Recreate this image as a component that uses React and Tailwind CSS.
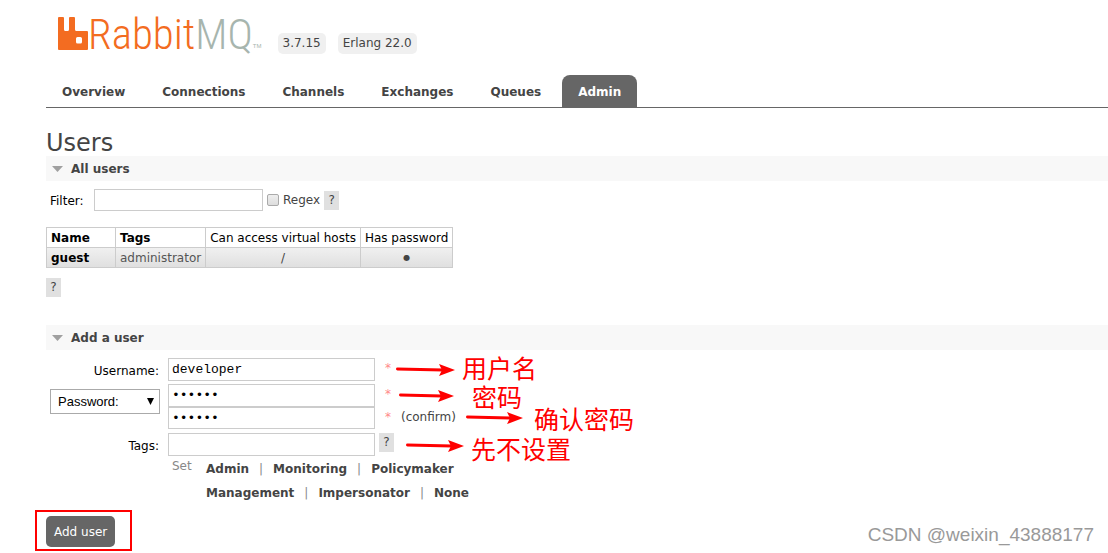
import React from "react";

const tabs = ["Overview", "Connections", "Channels", "Exchanges", "Queues", "Admin"];

const tagLinks = [
  ["Admin", "Monitoring", "Policymaker"],
  ["Management", "Impersonator", "None"],
];

const inputClass =
  "w-[207px] border border-[#ccc] bg-white px-[3px] font-['Liberation_Mono',monospace] text-[13px] leading-4 text-black outline-none";

function Logo() {
  return (
    <div className="flex h-[50px] items-end" aria-label="RabbitMQ">
      <svg width="30" height="33" viewBox="0 0 30 33" aria-hidden="true">
        <path
          fill="#f36c21"
          fillRule="evenodd"
          d="M1 0h4q1 0 1 1v11.500q0 1.500 1.500 1.500h2q1.500 0 1.500-1.500V1q0-1 1-1h4q1 0 1 1v11.500q0 1.500 1.500 1.500h10.500q1 0 1 1v17q0 1-1 1H1q-1 0-1-1V1q0-1 1-1zM19.500 20q-1.500 0-1.500 1.500v3.500q0 1.500 1.500 1.500h3q1.500 0 1.500-1.500V21.500q0-1.500-1.500-1.500z"
        />
      </svg>
      <span className="-mb-[9px] font-['Roboto_Condensed','Liberation_Sans_Narrow',sans-serif] text-[43px] leading-[50px] font-light text-[#f36c21]">
        Rabbit<span className="text-[#a7b5ae]">MQ</span>
      </span>
      <span className="font-['Liberation_Sans',sans-serif] text-[6px] leading-[8px] text-[#a7b5ae]">TM</span>
    </div>
  );
}

function Help() {
  return (
    <button type="button" aria-label="Help" className="h-[19px] w-[15px] bg-[#e0e0e0] text-[12px] leading-[19px] text-[#444]">
      ?
    </button>
  );
}

function SectionTitle({ children }) {
  return (
    <h2 className="flex h-[25px] items-center bg-[#f8f8f8] pl-[6px] font-bold text-[#444]">
      <svg width="11" height="6" viewBox="0 0 11 6" className="mr-2" aria-hidden="true">
        <path d="M0 0h11L5.500 6z" fill="#a0a0a0" />
      </svg>
      {children}
    </h2>
  );
}

function Required() {
  return <span className="ml-[10px] pt-[2px] text-[#f88]">*</span>;
}

function Note({ className, children }) {
  return (
    <span className={`absolute font-['Noto_Sans_CJK_SC',sans-serif] text-[25px] leading-[28px] whitespace-nowrap text-[#f00] ${className}`}>
      {children}
    </span>
  );
}

function Arrow({ className, length }) {
  return (
    <svg width={length} height="14" viewBox={`0 0 ${length} 14`} className={`absolute ${className}`} aria-hidden="true">
      <path d={`M1.500 6L${length - 12} 7`} stroke="#f00" strokeWidth="3" strokeLinecap="round" />
      <path d={`M${length} 7L${length - 16} 1L${length - 13} 7L${length - 16} 13z`} fill="#f00" />
    </svg>
  );
}

export default function App() {
  return (
    <div className="relative overflow-hidden bg-white pb-[6px] pl-[46px] font-['DejaVu_Sans',sans-serif] text-[12px] leading-4 text-[#444]">
      <header>
        <div className="flex h-[75px] items-start pl-3">
          <Logo />
          <ul className="mt-[33px] ml-4 flex gap-3">
            <li className="rounded-[5px] bg-[#f0f0f0] px-[5px] py-[3px] leading-[15px]">3.7.15</li>
            <li className="rounded-[5px] bg-[#f0f0f0] px-[5px] py-[3px] leading-[15px]">Erlang 22.0</li>
          </ul>
        </div>
        <nav className="border-b border-[#666]">
          <ul className="flex gap-[5px] font-bold">
            {tabs.map((tab) => (
              <li key={tab}>
                <a
                  href="#"
                  className={`block rounded-t-lg px-4 pt-[9px] pb-[7px] ${tab === "Admin" ? "bg-[#666] text-white" : ""}`}
                >
                  {tab}
                </a>
              </li>
            ))}
          </ul>
        </nav>
      </header>

      <main>
        <h1 className="pt-[23px] text-[24px] leading-[25px]">Users</h1>
        <section>
          <SectionTitle>All users</SectionTitle>
          <div className="flex items-center pt-2 pl-1">
            <label htmlFor="filter" className="w-11 pt-[2px] text-black">Filter:</label>
            <input id="filter" type="text" className="h-[22px] w-[169px] border border-[#ccc] px-1 outline-none" />
            <input
              id="regex"
              type="checkbox"
              className="ml-1 size-3 appearance-none rounded-[2px] border border-[#aaa] bg-linear-to-b from-[#eee] to-[#ddd] checked:from-[#888] checked:to-[#666]"
            />
            <label htmlFor="regex" className="mr-1 ml-1">Regex</label>
            <Help />
          </div>
          <table className="mt-4 border-collapse text-black">
            <thead>
              <tr className="h-5">
                <th className="w-[69px] border border-[#ccc] px-1 text-left">Name</th>
                <th className="border border-[#ccc] px-1 text-left">Tags</th>
                <th className="border border-[#ccc] px-1 font-normal">Can access virtual hosts</th>
                <th className="border border-[#ccc] px-1 font-normal">Has password</th>
              </tr>
            </thead>
            <tbody>
              <tr className="h-5 bg-linear-to-b from-[#f0f0f0] to-[#dfdfdf]">
                <td className="border border-[#ccc] px-1 font-bold"><a href="#">guest</a></td>
                <td className="border border-[#ccc] px-1 text-[#555]">administrator</td>
                <td className="border border-[#ccc] px-1 text-center text-[#444]">/</td>
                <td className="border border-[#ccc] px-1 text-center text-[8px] text-[#444]">●</td>
              </tr>
            </tbody>
          </table>
          <div className="mt-[10px] flex"><Help /></div>
        </section>

        <section className="pt-7">
          <SectionTitle>Add a user</SectionTitle>
          <form className="relative" onSubmit={(e) => e.preventDefault()}>
            <div className="grid grid-cols-[113px_1fr] gap-x-[9px] gap-y-[3px] pt-2">
              <label htmlFor="username" className="pt-[5px] text-right text-black">Username:</label>
              <div className="flex">
                <input id="username" type="text" defaultValue="developer" className={`${inputClass} h-[23px]`} />
                <Required />
              </div>

              <div className="relative mt-[5px] -mr-px ml-1 h-[25px]">
                <select
                  aria-label="Credential type"
                  className="h-[25px] w-full appearance-none border border-[#aaa] bg-white pl-[7px] font-['Liberation_Sans',sans-serif] text-[13px] text-black outline-none"
                >
                  <option>Password:</option>
                  <option>Hash:</option>
                </select>
                <svg width="7" height="7" viewBox="0 0 7 7" className="pointer-events-none absolute top-[9px] right-[6px]" aria-hidden="true">
                  <path d="M0 0h7L3.500 7z" fill="#000" />
                </svg>
              </div>
              <div>
                <div className="flex">
                  <input aria-label="Password" type="password" defaultValue="secret" className={`${inputClass} h-[23px]`} />
                  <Required />
                </div>
                <div className="flex">
                  <input aria-label="Confirm password" type="password" defaultValue="secret" className={`${inputClass} h-[22px]`} />
                  <Required />
                  <span className="ml-[10px] pt-[2px]">(confirm)</span>
                </div>
              </div>

              <label htmlFor="tags" className="pt-[6px] text-right text-black">Tags:</label>
              <div className="pt-px">
                <div className="flex">
                  <input id="tags" type="text" className={`${inputClass} mr-1 h-[23px]`} />
                  <Help />
                </div>
                <div className="flex">
                  <span className="w-[38px] pt-[2px] pl-1 text-[#888]">Set</span>
                  <div className="pt-px">
                    {tagLinks.map((row) => (
                      <div key={row[0]} className="flex h-6 items-center">
                        {row.map((tag, i) => (
                          <React.Fragment key={tag}>
                            {i > 0 && <span className="mx-[10px] text-[#888]">|</span>}
                            <button type="button" className="font-bold">{tag}</button>
                          </React.Fragment>
                        ))}
                      </div>
                    ))}
                  </div>
                </div>
              </div>
            </div>

            <div className="relative mt-[11px] inline-block">
              <button type="submit" className="h-[31px] rounded-[5px] bg-[#666] px-2 text-white">Add user</button>
              <div className="pointer-events-none absolute -top-[6px] -right-[17px] -bottom-1 -left-[11px] border-2 border-[#f00]" />
            </div>

            <div className="pointer-events-none absolute inset-0">
              <Arrow className="top-[13px] left-[350px]" length={59} />
              <Arrow className="top-[39px] left-[353px]" length={55} />
              <Arrow className="top-[61px] left-[420px]" length={57} />
              <Arrow className="top-[89px] left-[360px]" length={58} />
              <Note className="top-[3px] left-[416px]">用户名</Note>
              <Note className="top-[32px] left-[426px]">密码</Note>
              <Note className="top-[54px] left-[488px]">确认密码</Note>
              <Note className="top-[84px] left-[425px]">先不设置</Note>
            </div>
          </form>
        </section>
      </main>
      <span className="absolute right-[14px] bottom-[6px] font-['Liberation_Sans','Noto_Sans_CJK_SC',sans-serif] text-[19px] leading-6 text-[#999]">
        CSDN @weixin_43888177
      </span>
    </div>
  );
}
